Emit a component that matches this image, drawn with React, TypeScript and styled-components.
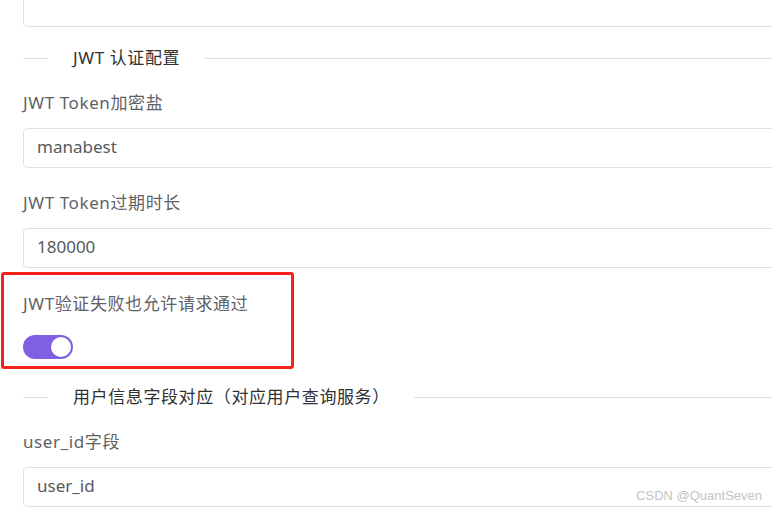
import React from "react";
import styled, { createGlobalStyle } from "styled-components";

const GlobalStyle = createGlobalStyle`
  html, body {
    margin: 0;
    padding: 0;
    background: #ffffff;
    overflow: hidden;
  }
  body {
    font-family: "Noto Sans", "Noto Sans CJK SC", sans-serif;
  }
`;

const Page = styled.div`
  position: relative;
  width: 772px;
  height: 509px;
  overflow: hidden;
  background: #fff;
`;

const Form = styled.div`
  display: flex;
  flex-direction: column;
  width: 780px;
  padding-left: 23px;
  margin-top: -13px;
`;

const FormItem = styled.div<{ $mb?: number }>`
  display: flex;
  flex-direction: column;
  margin-bottom: ${(p) => (p.$mb ?? 23)}px;
`;

const Label = styled.div<{ $mb?: number }>`
  height: 24px;
  line-height: 24px;
  font-size: 17px;
  letter-spacing: 0.6px;
  color: #606266;
  margin-bottom: ${(p) => (p.$mb ?? 13)}px;
  white-space: nowrap;
`;

const Field = styled.div`
  box-sizing: border-box;
  height: 40px;
  border: 1px solid #dcdfe6;
  border-radius: 4px;
  padding: 0 13px 4px;
  display: flex;
  align-items: center;
  font-size: 17px;
  color: #555a60;
  background: #fff;
`;

const Divider = styled.div<{ $mb?: number }>`
  display: flex;
  align-items: center;
  height: 24px;
  margin-bottom: ${(p) => (p.$mb ?? 21)}px;
  &::before,
  &::after {
    content: "";
    height: 1px;
    background: #dcdfe6;
  }
  &::before {
    width: 25px;
    flex: none;
  }
  &::after {
    flex: 1;
  }
`;

const DividerTitle = styled.span<{ $gapRight?: number }>`
  padding: 0 ${(p) => p.$gapRight ?? 25}px 0 25px;
  font-size: 17px;
  letter-spacing: 0.6px;
  color: #303133;
  white-space: nowrap;
  line-height: 24px;
`;

const Highlight = styled.div`
  position: relative;
  &::after {
    content: "";
    position: absolute;
    left: -22px;
    top: -20px;
    width: 293px;
    height: 97px;
    box-sizing: border-box;
    border: 3px solid #f5221b;
    border-radius: 3px;
    pointer-events: none;
  }
`;

const SwitchTrack = styled.div<{ $on: boolean }>`
  position: relative;
  width: 50px;
  height: 24px;
  border-radius: 12px;
  background: ${(p) => (p.$on ? "#8060e0" : "#dcdfe6")};
`;

const SwitchKnob = styled.span<{ $on: boolean }>`
  position: absolute;
  top: 2px;
  left: ${(p) => (p.$on ? "28px" : "2px")};
  width: 20px;
  height: 20px;
  border-radius: 50%;
  background: #fff;
`;

const Watermark = styled.div`
  position: absolute;
  right: 10px;
  bottom: 6px;
  font-size: 13px;
  color: #c4c4c4;
  font-family: "Liberation Sans", "Noto Sans", sans-serif;
`;

export default function App() {
  return (
    <Page>
      <GlobalStyle />
      <Form>
        <FormItem $mb={19}>
          <Field />
        </FormItem>

        <Divider>
          <DividerTitle>JWT 认证配置</DividerTitle>
        </Divider>

        <FormItem>
          <Label>JWT Token加密盐</Label>
          <Field>manabest</Field>
        </FormItem>

        <FormItem $mb={24}>
          <Label>JWT Token过期时长</Label>
          <Field>180000</Field>
        </FormItem>

        <Highlight>
          <FormItem $mb={26}>
            <Label $mb={19}>JWT验证失败也允许请求通过</Label>
            <SwitchTrack $on>
              <SwitchKnob $on />
            </SwitchTrack>
          </FormItem>
        </Highlight>

        <Divider>
          <DividerTitle $gapRight={24}>用户信息字段对应（对应用户查询服务）</DividerTitle>
        </Divider>

        <FormItem>
          <Label>user_id字段</Label>
          <Field>user_id</Field>
        </FormItem>
      </Form>
      <Watermark>CSDN @QuantSeven</Watermark>
    </Page>
  );
}
